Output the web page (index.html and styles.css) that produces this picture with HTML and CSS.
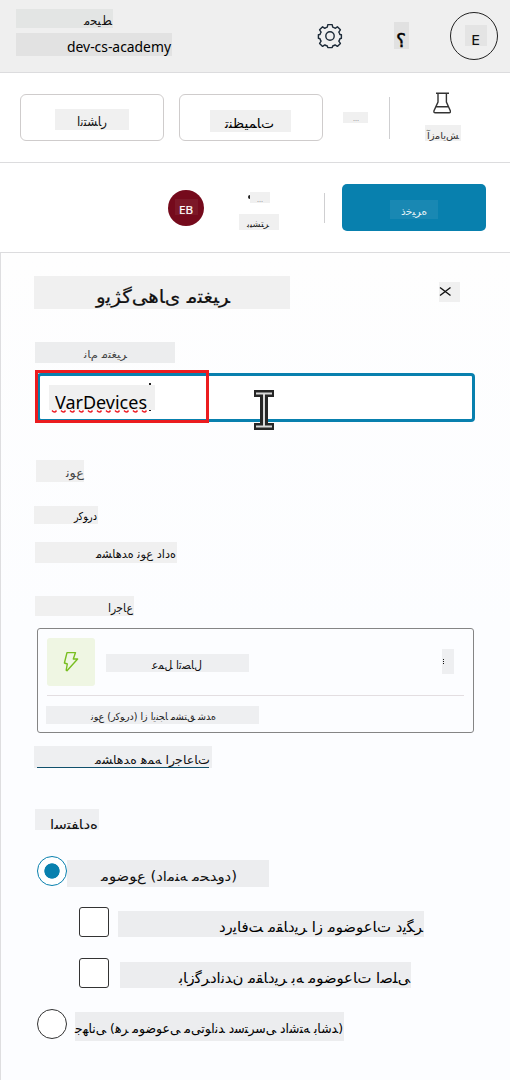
FILE: index.html
```
<!DOCTYPE html>
<html lang="fa">
<head>
<meta charset="utf-8">
<title>dev-cs-academy</title>
<link rel="stylesheet" href="styles.css">
</head>
<body>
<header class="topbar">
  <div class="env">
    <div class="chip env-label"><span>ﻣﺤﯿﻂ</span></div>
    <div class="chip latin env-name"><span>dev-cs-academy</span></div>
  </div>
  <svg class="gear" viewBox="0 0 26 26"><path d="M10.8 1.600h4.400l.5 2.600q1.400.4 2.400 1.100l2.300-1.500 3 3-1.600 2.300q.8 1.100 1.100 2.400l1.500.3v3.500l-1.500.4q-.4 1.400-1.100 2.500l1.600 2.200-3 3-2.300-1.500q-1.100.7-2.400 1.100l-.5 1.600h-4.400l-.5-1.600q-1.400-.4-2.500-1.100l-2.200 1.500-3-3 1.500-2.200q-.7-1.100-1.100-2.500l-1.600-.4v-3.500l1.600-.3q.4-1.400 1.100-2.400l-1.500-2.300 3-3 2.200 1.500q1.100-.7 2.500-1.100z"/><circle cx="13" cy="13" r="4.200"/></svg>
  <div class="chip help"><span>؟</span></div>
  <div class="user"><div class="chip latin user-letter"><span>E</span></div></div>
</header>
<section class="toolbar">
  <div class="outline-btn"><div class="chip publish"><span>ﺍﻧﺘﺸﺎﺭ</span></div></div>
  <div class="outline-btn second"><div class="chip settings"><span>ﺗﻨﻈﯿﻤﺎﺕ</span></div></div>
  <div class="chip more-a"><span>...</span></div>
  <div class="divider tall"></div>
  <div class="test">
    <svg class="flask" viewBox="0 0 18 22"><path d="M3 1.300h13M5 1.300v8.700L1 18.800q-.5 2 1.300 2h14q1.500 0 1-2L13.400 10V1.300M3 14.800h12"/></svg>
    <div class="chip test-label"><span>ﺁﺯﻣﺎﯾﺶ</span></div>
  </div>
</section>
<section class="actions">
  <div class="avatar"><div class="chip latin avatar-text"><span>EB</span></div></div>
  <div class="more">
    <div class="chip more-b"><span>...</span></div>
    <div class="chip more-label"><span>ﺑﯿﺸﺘﺮ</span></div>
  </div>
  <div class="divider short"></div>
  <div class="save"><div class="chip save-text"><span>ﺫﺧﯿﺮﻩ</span></div></div>
</section>
<main class="panel">
  <div class="title-row">
    <div class="chip title"><span>ﻭﯾﮋﮔﯽ&zwnj;ﻫﺎﯼ ﻣﺘﻐﯿﺮ</span></div>
    <div class="close"><svg viewBox="0 0 21 20"><path d="M1 5.500 11.500 13.500M11.500 5.500 1 13.500"/></svg></div>
  </div>
  <div class="chip name-label"><span>ﻧﺎﻡ ﻣﺘﻐﯿﺮ</span></div>
  <div class="input">
    <div class="chip latin value"><span>VarDevices</span></div>
    <svg class="squiggle" viewBox="0 0 101 32"><path d="M1 27.500q2.500 3 4.500 0m4.500 0q2.500 3 4.500 0m4.500 0q2.500 3 4.500 0m4.500 0q2.500 3 4.500 0m4.500 0q2.500 3 4.500 0m4.500 0q2.500 3 4.500 0m4.500 0q2.500 3 4.500 0m4.500 0q2.500 3 4.500 0m4.500 0q2.500 3 4.500 0m4.500 0q2.500 3 4.500 0m4.500 0q2.500 3 4.500 0"/><rect x="98" y="0" width="2" height="2"/><rect x="98" y="27" width="2" height="1"/></svg>
    <div class="highlight"></div>
    <svg class="ibeam" viewBox="0 0 20 40"><path class="outer" d="M0 0h20v7h-6v26h6v7H0v-7h6V7H0z"/><path class="inner" d="M2 2.500h16v2H2zM2 35.500h16v2H2zM9 4h2v32H9z"/></svg>
  </div>
  <div class="chip type-label"><span>ﻧﻮﻉ</span></div>
  <div class="chip type-value"><span>ﺭﮐﻮﺭﺩ</span></div>
  <div class="chip type-link"><span>ﻣﺸﺎﻫﺪﻩ ﻧﻮﻉ ﺩﺍﺩﻩ</span></div>
  <div class="chip ref-label"><span>ﺍﺭﺟﺎﻉ</span></div>
  <div class="card">
    <div class="card-head">
      <div class="bolt"><svg viewBox="0 0 16 22"><path d="M4 1.600h8.500L10.300 8h4.300L4 19.800l-.8-.6L4.300 13 1.400 12z"/></svg></div>
      <div class="chip action"><span>ﻋﻤﻞ ﺍﺗﺼﺎﻝ</span></div>
      <div class="kebab"><i></i><i></i><i></i></div>
    </div>
    <div class="chip derived"><span>ﻧﻮﻉ (ﺭﮐﻮﺭﺩ) ﺍﺯ ﺍﯾﻨﺠﺎ ﻣﺸﺘﻖ ﺷﺪﻩ</span></div>
  </div>
  <div class="chip all-refs"><span>ﻣﺸﺎﻫﺪﻩ ﻫﻤﻪ ﺍﺭﺟﺎﻋﺎﺕ</span></div>
  <div class="chip usage"><span>ﺍﺳﺘﻔﺎﺩﻩ</span></div>
  <div class="option topic-row"><div class="radio on"></div><div class="chip topic"><span>ﻣﻮﺿﻮﻉ (ﺩﺍﻣﻨﻪ ﻣﺤﺪﻭﺩ)</span></div></div>
  <div class="option check-row"><div class="check"></div><div class="chip receive"><span>ﺩﺭﯾﺎﻓﺖ ﻣﻘﺎﺩﯾﺮ ﺍﺯ ﻣﻮﺿﻮﻋﺎﺕ ﺩﯾﮕﺮ</span></div></div>
  <div class="option check-row"><div class="check"></div><div class="chip return"><span>ﺑﺎﺯﮔﺮﺩﺍﻧﺪﻥ ﻣﻘﺎﺩﯾﺮ ﺑﻪ ﻣﻮﺿﻮﻋﺎﺕ ﺍﺻﻠﯽ</span></div></div>
  <div class="option"><div class="radio"></div><div class="chip global"><span>ﺟﻬﺎﻧﯽ (ﻫﺮ ﻣﻮﺿﻮﻋﯽ ﻣﯽ&zwnj;ﺗﻮﺍﻧﺪ ﺩﺳﺘﺮﺳﯽ ﺩﺍﺷﺘﻪ ﺑﺎﺷﺪ)</span></div></div>
</main>
<script src="fit.js"></script>
</body>
</html>
```
FILE: styles.css
```
* { box-sizing: border-box; }
body {
  margin: 0; width: 510px; height: 1080px; overflow: hidden;
  background: #fff; color: #111;
  font-family: "DejaVu Sans", sans-serif;
}
svg { display: block; fill: none; }

/* Label on a grey plate: --x text offset, --b baseline, --w text width */
.chip {
  width: var(--cw); height: var(--ch); flex: none;
  padding-left: var(--x); background: #f0f0f0;
  white-space: nowrap; direction: ltr; unicode-bidi: bidi-override;
}
.chip span {
  display: block; width: max-content; line-height: 0;
  padding-top: calc(var(--b) - .346em);
  transform-origin: 0 0; unicode-bidi: bidi-override;
}
.latin { font-family: "Noto Sans", sans-serif; }
.latin span { padding-top: calc(var(--b) - .388em); }

.topbar { height: 73px; display: flex; background: #efefef; border-bottom: 1px solid #dcdcde; }
.env { width: 317px; padding: 9px 0 0 16px; }
.env-label { --cw: 97px; --ch: 19px; --x: 68px; --b: 16px; --w: 28px; font-size: 12.5px; background: #e3e5e4; }
.env-name { --cw: 156px; --ch: 23px; --x: 51px; --b: 19px; --w: 104px; font-size: 14px; margin-top: 5px; background: #e2e2e2; color: #000; }
.gear { width: 26px; height: 26px; margin-top: 23px; stroke: #1c2a38; stroke-width: 1.4; stroke-linejoin: round; }
.help { --cw: 15px; --ch: 27px; --x: 2px; --b: 25px; --w: 10px; font-size: 18px; margin: 22px 0 0 51px; background: #e1e1e1; color: #000; -webkit-text-stroke: .4px #000; }
.user { width: 48px; height: 48px; margin: 12px 0 0 41px; border: 1px solid #222; border-radius: 50%; padding: 12px 0 0 14px; }
.user-letter { --cw: 22px; --ch: 21px; --x: 6px; --b: 20px; --w: 9px; font-size: 15px; background: #e4e4e4; }

.toolbar { height: 90px; display: flex; padding: 21px 0 0 20px; border-bottom: 1px solid #dcdcde; }
.outline-btn { width: 144px; height: 47px; border: 1px solid #cfcccc; border-radius: 6px; padding: 14px 0 0 34px; background: #fff; }
.second { margin-left: 15px; padding: 15px 0 0 30px; }
.publish { --cw: 74px; --ch: 21px; --x: 22px; --b: 17px; --w: 30px; font-size: 12.5px; }
.settings { --cw: 81px; --ch: 22px; --x: 15px; --b: 18px; --w: 49px; font-size: 13px; color: #000; }
.more-a { --cw: 25px; --ch: 11px; --x: 10px; --b: 9px; --w: 6px; font-size: 7px; margin: 18px 0 0 20px; color: #777; }
.divider { width: 1px; background: #cfcfd1; }
.tall { height: 42px; margin: 3px 0 0 21px; }
.test { margin-left: 34px; margin-top: -3px; }
.flask { width: 18px; height: 22px; margin: 1px 0 0 9px; stroke: #333; stroke-width: 1.4; }
.test-label { --cw: 36px; --ch: 16px; --x: 2px; --b: 14px; --w: 32px; font-size: 9.5px; margin: 11px 0 0 1px; color: #333; }

.actions { height: 90px; display: flex; padding: 21px 0 0 168px; border-bottom: 1px solid #dcdcde; }
.avatar { width: 36px; height: 36px; margin-top: 6px; border-radius: 50%; background: #750a1c; padding: 9px 0 0 7px; }
.avatar-text { --cw: 23px; --ch: 16px; --x: 4px; --b: 15px; --w: 14px; font-size: 11.5px; color: #fff; background: #7c1828; -webkit-text-stroke: .2px #fff; }
.more { width: 40px; margin: 8px 0 0 35px; }
.more-b { --cw: 20px; --ch: 11px; --x: 7px; --b: 10px; --w: 6px; font-size: 7px; margin-left: 11px; color: #777; position: relative; }
.more-b::before { content: ""; position: absolute; left: -2px; top: 3px; width: 2px; height: 4px; border-radius: 2px 0 0 2px; background: #222; }
.more-label { --cw: 40px; --ch: 16px; --x: 8px; --b: 13px; --w: 22px; font-size: 9px; margin-top: 11px; color: #222; }
.short { height: 30px; margin: 9px 0 0 45px; }
.save { width: 144px; height: 47px; margin-left: 17px; border-radius: 5px; background: #0880ae; padding: 16px 0 0 48px; }
.save-text { --cw: 48px; --ch: 19px; --x: 11px; --b: 15px; --w: 26px; font-size: 10.5px; background: #1988b3; color: #e6f4f8; }

.panel { height: 827px; border-left: 1px solid #dedee0; padding: 23px 0 0 33px; background: linear-gradient(#fefefe, #fcfdff 45%); }
.title-row { display: flex; }
.title { --cw: 256px; --ch: 33px; --x: 62px; --b: 27px; --w: 134px; font-size: 18.5px; -webkit-text-stroke: .2px #111; }
.close { width: 21px; height: 20px; margin: 6px 0 0 149px; background: #f0f0f0; }
.close svg { stroke: #111; stroke-width: 1.4; }
.name-label { --cw: 140px; --ch: 21px; --x: 49px; --b: 16px; --w: 43px; font-size: 10.5px; margin: 33px 0 0 1px; background: #ecedee; color: #444; }
.input { position: relative; width: 438px; height: 49px; margin: 10px 0 0 3px; border: 3px solid #0880ae; border-radius: 4px; background: #fff; padding: 9px 0 0 9px; }
.value { --cw: 106px; --ch: 25px; --x: 6px; --b: 24px; --w: 92px; font-size: 18px; color: #000; }
.highlight { position: absolute; left: -5px; top: -6px; width: 174px; height: 53px; border: 3px solid #eb1c1f; }
.squiggle { position: absolute; left: 11px; top: 7px; width: 101px; height: 32px; }
.squiggle path { stroke: #ed1c24; stroke-width: 1.5; }
.squiggle rect { fill: #222; }
.ibeam { position: absolute; left: 214px; top: 14px; width: 20px; height: 40px; }
.outer { fill: #262626; }
.inner { fill: #d8d8d8; }

.type-label { --cw: 48px; --ch: 22px; --x: 30px; --b: 17px; --w: 18px; font-size: 12px; margin: 38px 0 0 2px; color: #444; }
.type-value { --cw: 64px; --ch: 18px; --x: 40px; --b: 15px; --w: 23px; font-size: 11px; margin-top: 24px; color: #000; }
.type-link { --cw: 142px; --ch: 21px; --x: 61px; --b: 16px; --w: 80px; font-size: 11.5px; margin: 18px 0 0 1px; }
.ref-label { --cw: 99px; --ch: 20px; --x: 73px; --b: 16px; --w: 25px; font-size: 12px; margin: 33px 0 0 1px; }
.card { width: 437px; height: 105px; margin: 12px 0 0 3px; border: 1px solid #858585; border-radius: 3px; padding: 9px; }
.card-head { display: flex; height: 58px; border-bottom: 1px solid #e3dee1; }
.bolt { width: 48px; height: 48px; border-radius: 3px; background: #eff6e3; padding: 13px 0 0 16px; }
.bolt svg { width: 16px; height: 22px; stroke: #78be20; stroke-width: 1.4; stroke-linejoin: round; }
.card .chip, .all-refs, .usage { background: #eeeff1; }
.action { --cw: 143px; --ch: 18px; --x: 46px; --b: 15px; --w: 50px; font-size: 12px; margin: 16px 0 0 11px; }
.kebab { width: 12px; height: 25px; margin: 11px 0 0 193px; background: #eeeff1; padding: 10px 0 0 1px; }
.kebab i { display: block; width: 1px; height: 1px; background: #111; margin-bottom: 1px; }
.derived { --cw: 213px; --ch: 18px; --x: 45px; --b: 14px; --w: 125px; font-size: 10px; margin: 10px 0 0 -1px; color: #222; }
.all-refs { --cw: 178px; --ch: 22px; --x: 61px; --b: 18px; --w: 115px; font-size: 12px; margin-top: 13px; position: relative; }
.all-refs::after { content: ""; position: absolute; left: 3px; top: 21px; width: 172px; height: 1px; background: #10506c; }
.usage { --cw: 64px; --ch: 21px; --x: 15px; --b: 20px; --w: 48px; font-size: 13px; margin: 41px 0 0 1px; }
.option { display: flex; height: 51px; padding-left: 3px; }
.option .chip { background: #ecedef; }
.topic-row { margin-top: 26px; }
.radio { width: 30px; height: 30px; border: 1px solid #333; border-radius: 50%; background: #fff; flex: none; }
.on { border-color: #0880ae; background: radial-gradient(circle, #0880ae 7.300px, #fff 8px); }
.check { width: 30px; height: 30px; border: 1px solid #333; border-radius: 3px; background: #fff; }
.check-row { padding-left: 45px; }
.topic { --cw: 202px; --ch: 27px; --x: 34px; --b: 21px; --w: 136px; font-size: 13.5px; margin-top: 4px; }
.receive { --cw: 306px; --ch: 26px; --x: 101px; --b: 21px; --w: 204px; font-size: 14.5px; margin: 4px 0 0 9px; color: #000; }
.return { --cw: 291px; --ch: 26px; --x: 59px; --b: 21px; --w: 231px; font-size: 14.5px; margin: 4px 0 0 11px; color: #000; }
.global { --cw: 269px; --ch: 29px; --x: 0px; --b: 21px; --w: 268px; font-size: 13px; margin: 3px 0 0 8px; color: #000; }
```
FILE: fit.js
```
// Condense each label horizontally to its --w width.
document.querySelectorAll('.chip span').forEach(function (label) {
  var width = parseFloat(getComputedStyle(label).getPropertyValue('--w'));
  label.style.transform = 'scaleX(' + width / label.getBoundingClientRect().width + ')';
});
```
